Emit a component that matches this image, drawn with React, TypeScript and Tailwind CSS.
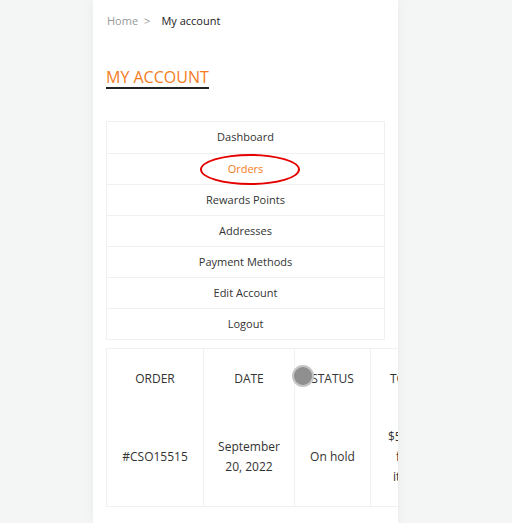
import { useState } from 'react'

const MENU = ['Dashboard', 'Orders', 'Rewards Points', 'Addresses', 'Payment Methods', 'Edit Account', 'Logout']

export default function App() {
  const [active, setActive] = useState('Orders')

  return (
    <div className="min-h-[523px] overflow-hidden bg-[#f4f5f5] font-['Open_Sans',sans-serif]">
      <div className="ml-[93px] min-h-[523px] w-[305px] overflow-hidden bg-white px-[13px] shadow-[0_0_12px_rgba(0,0,0,0.05)]">
        {/* breadcrumb */}
        <div className="flex items-center pt-[13px] text-[11px] leading-[16px]">
          <span className="pl-px text-[#999]">Home</span>
          <span className="ml-[6px] text-[#999]">&gt;</span>
          <span className="ml-[11px] text-[#222]">My account</span>
        </div>

        <h1 className="mt-[38px] w-fit border-b-2 border-[#222] text-[16px] leading-[20px] text-[#f57c22]">
          MY ACCOUNT
        </h1>

        {/* account menu */}
        <div className="relative mt-[32px] border border-[#f0f0f0]">
          {MENU.map((item, i) => (
            <button
              key={item}
              onClick={() => setActive(item)}
              className={`flex h-[31px] w-full items-center justify-center text-[11px] ${i > 0 ? 'border-t border-[#f0f0f0]' : ''} ${active === item ? 'text-[#f57c22]' : 'text-[#333]'}`}
            >
              {item}
            </button>
          ))}
          <div className="pointer-events-none absolute left-[93px] top-[32px] h-[31px] w-[100px] rounded-[50%] border-[2.5px] border-[#e50000]" />
        </div>

        {/* orders table */}
        <div className="relative mt-[8px] w-[400px] border border-[#f0f0f0] text-[12px] leading-[20px] text-[#333]">
          <div className="grid grid-cols-[96px_91px_76px_137px]">
            <div className="flex h-[59px] items-center justify-center pt-[1px]">ORDER</div>
            <div className="flex h-[59px] items-center justify-center border-l border-[#f0f0f0] pt-[1px]">DATE</div>
            <div className="flex h-[59px] items-center justify-center border-l border-[#f0f0f0] pt-[1px]">STATUS</div>
            <div className="flex h-[59px] items-start justify-start border-l border-[#f0f0f0] pl-[19px] pt-[20px]">TOTAL</div>

            <div className="flex h-[98px] items-center justify-center">#CSO15515</div>
            <div className="flex h-[98px] items-center justify-center border-l border-[#f0f0f0] text-center">
              September<br />20, 2022
            </div>
            <div className="flex h-[98px] items-center justify-center border-l border-[#f0f0f0]">On hold</div>
            <div className="flex h-[98px] flex-col justify-center border-l border-[#f0f0f0] pl-[17px]">
              <span>$59.00</span>
              <span className="pl-[8px]">for 1</span>
              <span className="pl-[5px]">item</span>
            </div>
          </div>
          <div className="pointer-events-none absolute left-[185px] top-[16px] h-[22px] w-[22px] rounded-full border-[2px] border-[#c4c4c4] bg-[#8f8f8f]" />
        </div>
      </div>
    </div>
  )
}
